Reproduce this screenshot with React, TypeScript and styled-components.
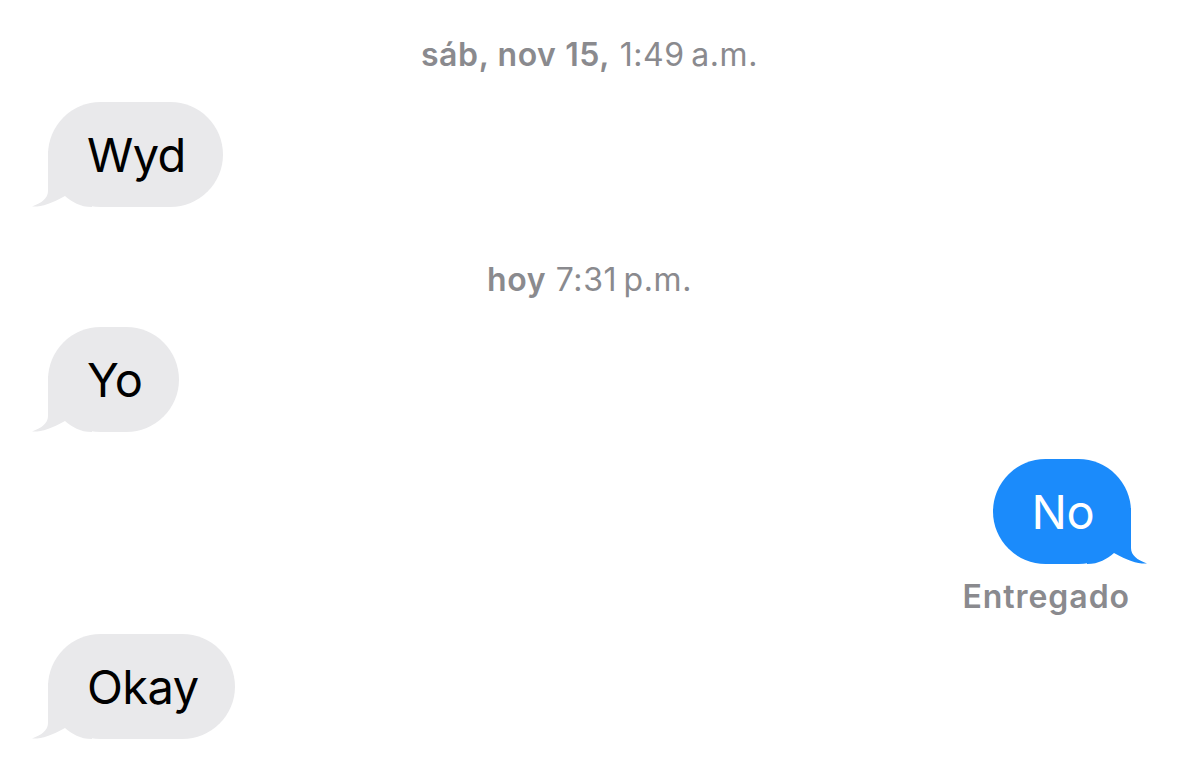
import React from "react";
import styled, { createGlobalStyle } from "styled-components";

const GlobalStyle = createGlobalStyle`
  html, body { margin: 0; padding: 0; background: #ffffff; }
  body { font-family: Inter, "Noto Sans", "Liberation Sans", sans-serif; -webkit-font-smoothing: antialiased; }
`;

const Thread = styled.main`
  display: flex;
  flex-direction: column;
  width: 1179px;
  height: 783px;
  box-sizing: border-box;
  padding: 38px 48px 0 48px;
  overflow: hidden;
`;

const Timestamp = styled.div<{ $top: number }>`
  margin-top: ${(p) => p.$top}px;
  text-align: center;
  font-size: 32px;
  line-height: 34px;
  color: #8a8a8e;
  font-weight: 400;
  letter-spacing: 0.6px;
  b { font-weight: 600; }
`;

const Row = styled.div<{ $top: number; $out?: boolean }>`
  margin-top: ${(p) => p.$top}px;
  display: flex;
  justify-content: ${(p) => (p.$out ? "flex-end" : "flex-start")};
`;

const Bubble = styled.div<{ $out?: boolean }>`
  position: relative;
  box-sizing: border-box;
  height: 105px;
  padding: 0 37px 0 39px;
  border-radius: 53px;
  display: flex;
  align-items: center;
  font-size: 47px;
  letter-spacing: -0.6px;
  font-weight: 400;
  background: ${(p) => (p.$out ? "#1b8bfb" : "#e9e9eb")};
  color: ${(p) => (p.$out ? "#ffffff" : "#000000")};
`;

const BubbleText = styled.span`
  position: relative;
`;

const Tail = styled.svg<{ $out?: boolean }>`
  position: absolute;
  bottom: 0;
  width: 60px;
  height: 56px;
  ${(p) => (p.$out ? "right: -16px; transform: scaleX(-1);" : "left: -16px;")}
`;

const Status = styled.div`
  margin-top: 16px;
  text-align: right;
  padding-right: 1px;
  font-size: 32px;
  line-height: 34px;
  font-weight: 600;
  color: #8a8a8e;
  letter-spacing: 0.95px;
`;

const BubbleTail = ({ out, color }: { out?: boolean; color: string }) => (
  <Tail $out={out} viewBox="0 0 60 56" aria-hidden="true">
    <path
      d="M16,0 L16,40 C16,47 10,52 0,55.5 C9,56 19,53 33,45 C40,51 48,56 60,56 L60,0 Z"
      fill={color}
    />
  </Tail>
);

const Message = ({ text, out, top }: { text: string; out?: boolean; top: number }) => (
  <Row $top={top} $out={out}>
    <Bubble $out={out}>
      <BubbleTail out={out} color={out ? "#1b8bfb" : "#e9e9eb"} />
      <BubbleText>{text}</BubbleText>
    </Bubble>
  </Row>
);

export default function App() {
  return (
    <>
      <GlobalStyle />
      <Thread>
        <Timestamp $top={0}>
          <b>sáb, nov 15,</b> 1:49{"\u202F"}a.m.
        </Timestamp>
        <Message text="Wyd" top={30} />
        <Timestamp $top={56}>
          <b>hoy</b> 7:31{"\u202F"}p.m.
        </Timestamp>
        <Message text="Yo" top={30} />
        <Message text="No" out top={27} />
        <Status>Entregado</Status>
        <Message text="Okay" top={20} />
      </Thread>
    </>
  );
}
